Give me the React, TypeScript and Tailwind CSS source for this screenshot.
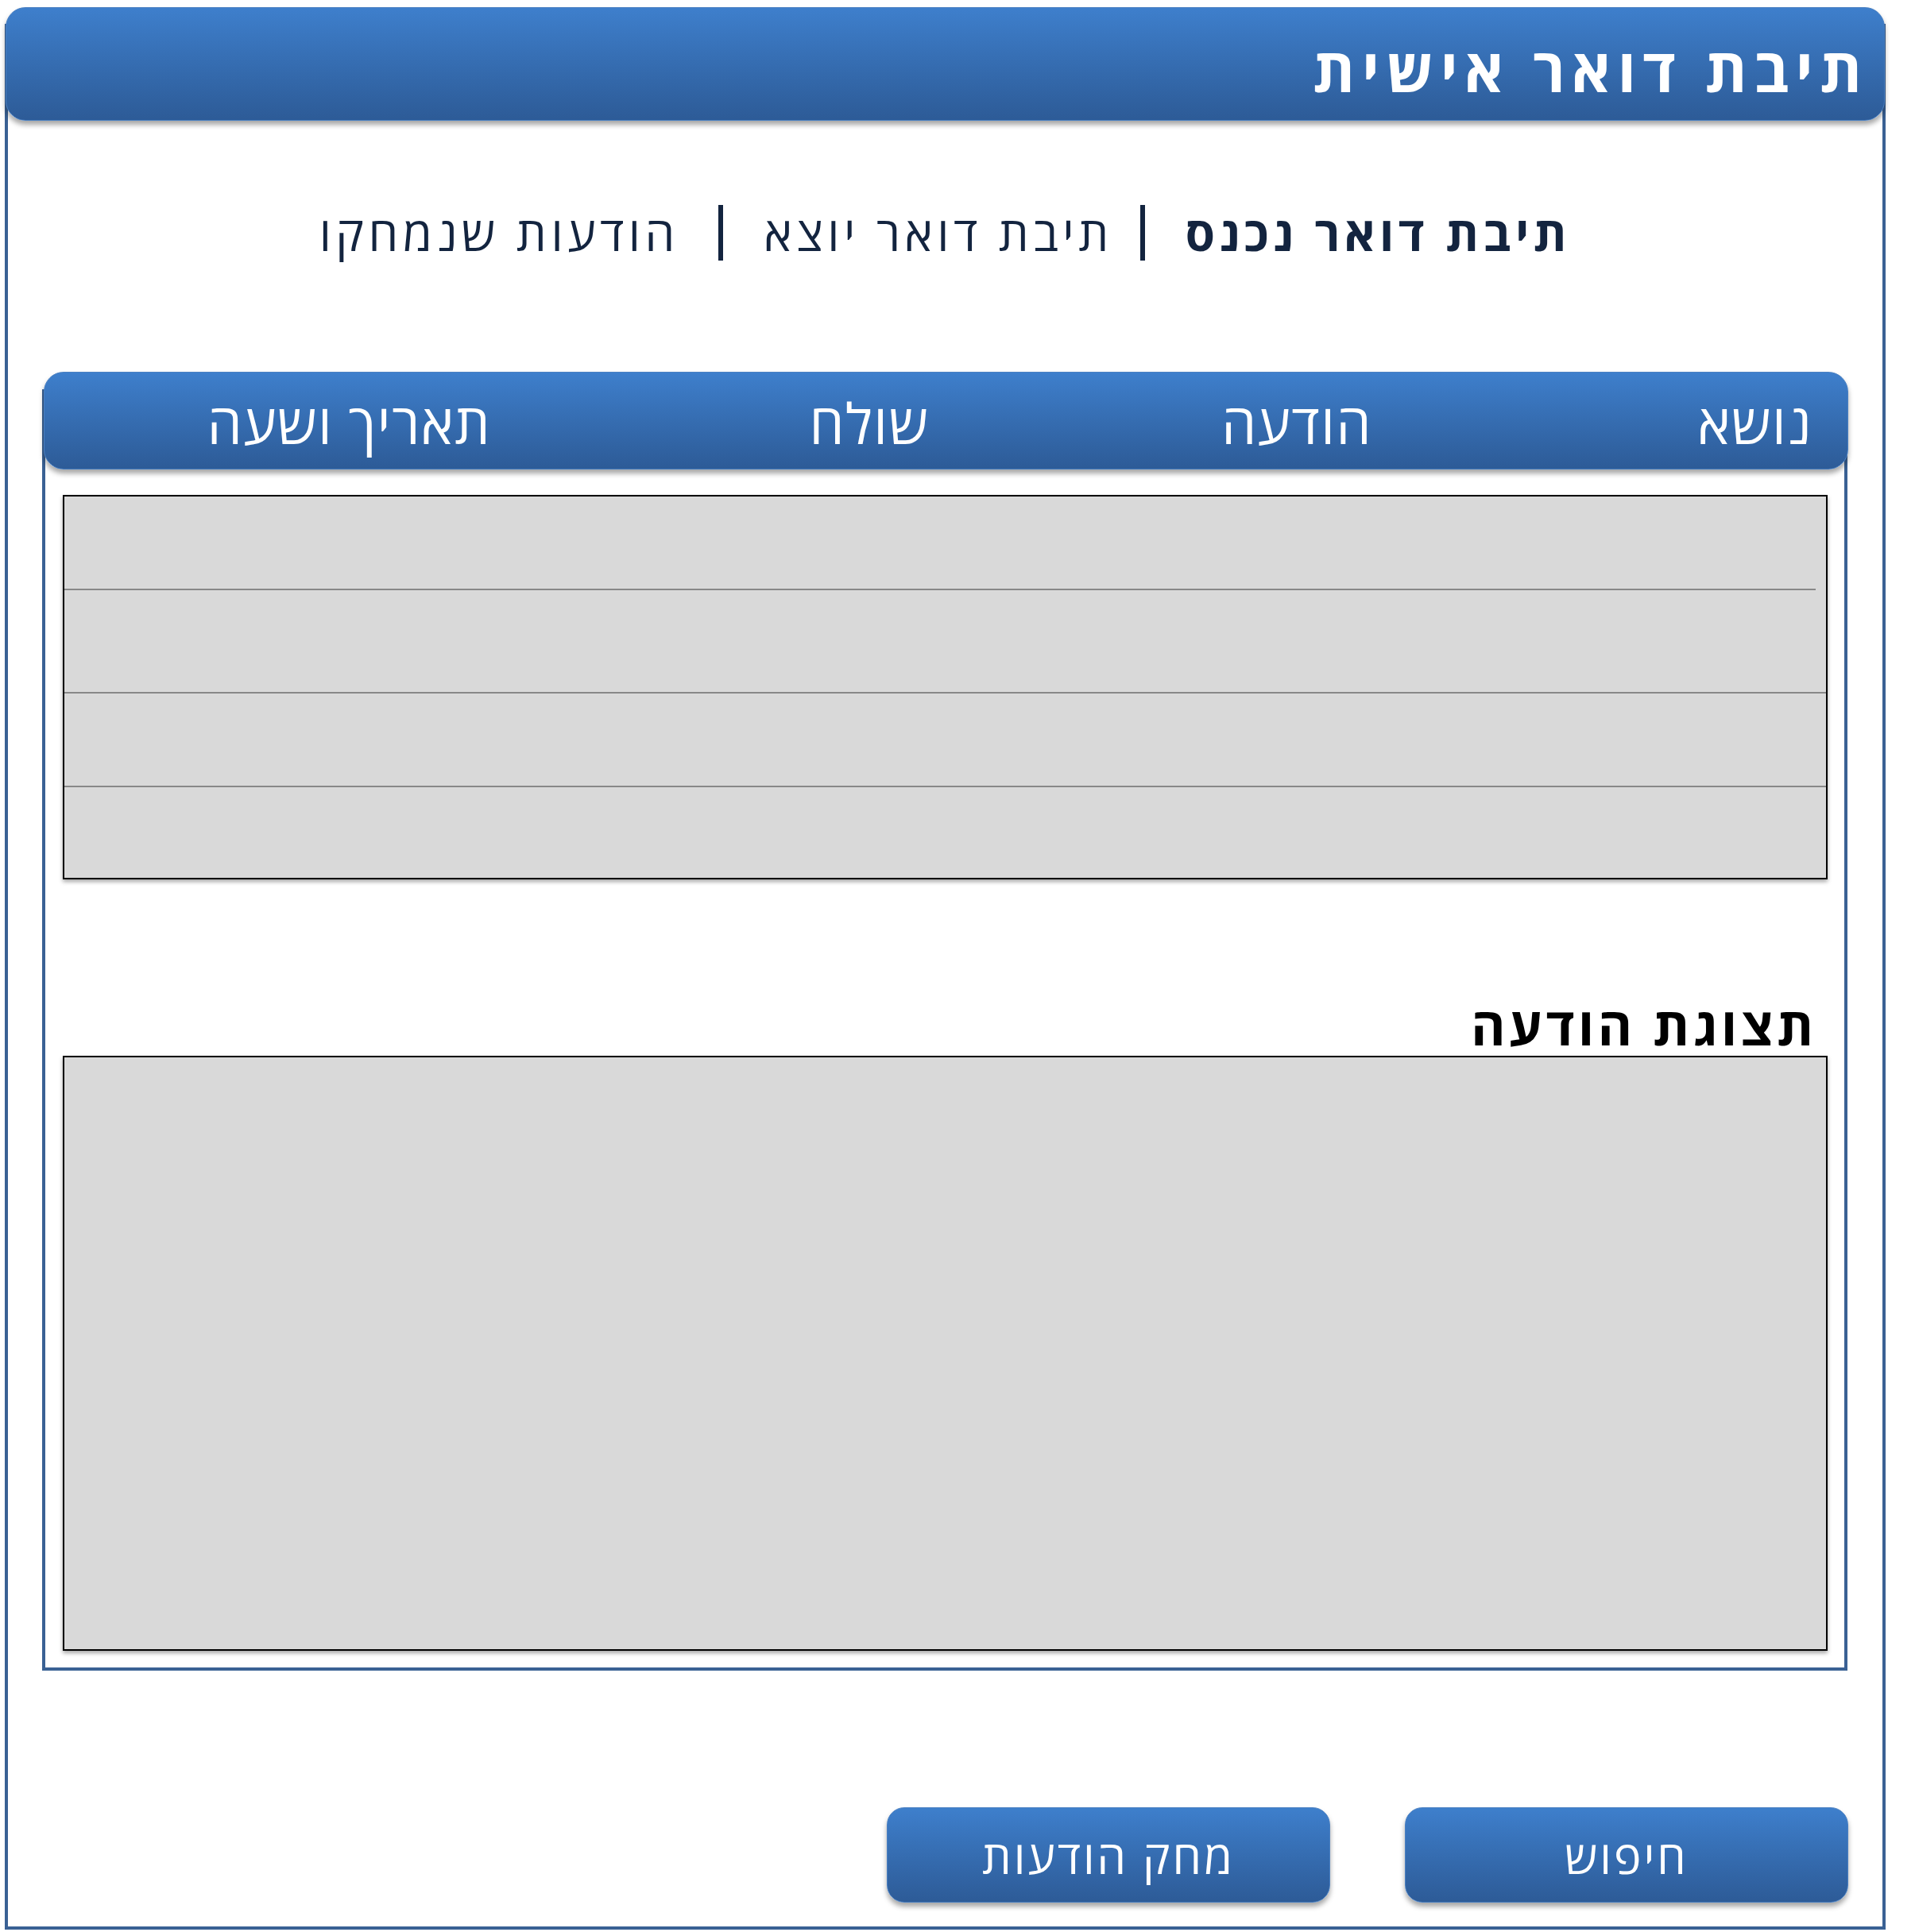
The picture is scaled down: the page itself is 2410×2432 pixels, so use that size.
import React from 'react';

const BAR = 'bg-gradient-to-b from-[#3e7fcc] to-[#2d5b97] border border-[#4a80c2] shadow-[0_5px_6px_rgba(0,0,0,0.35)] text-white';

const Button = ({ label }: { label: string }) => (
  <button className={`w-[558px] h-[120px] rounded-[22px] ${BAR} text-[58px] tracking-[3px] leading-none pt-[4px]`}>{label}</button>
);

const App = () => {
  return (
    <div dir="rtl" className="w-[2410px] h-[2432px] bg-white font-['Open_Sans','Liberation_Sans',sans-serif]">
      {/* outer frame */}
      <div className="mr-[37px] ml-[6px] mt-[30px] w-[2367px] h-[2399px] border-x-[4px] border-b-[4px] border-[#3a6194] flex flex-col">
        <div className={`-mt-[21px] -mx-[3px] h-[143px] shrink-0 rounded-[25px] ${BAR} flex items-center pr-[19px] pt-[13px]`}>
          <h1 className="text-[76px] font-bold tracking-[8.5px] leading-none">תיבת דואר אישית</h1>
        </div>

        {/* folders */}
        <div className="h-[316px] shrink-0 flex items-center justify-center pb-[34px] text-[60px] tracking-[5.5px] leading-none text-[#13243f]">
          <span className="font-bold">תיבת דואר נכנס</span>
          <span className="w-[6px] h-[70px] bg-[#13243f] mr-[51px] ml-[34px]" />
          <span>תיבת דואר יוצא</span>
          <span className="w-[6px] h-[70px] bg-[#13243f] mr-[52px] ml-[49px]" />
          <span>הודעות שנמחקו</span>
        </div>

        {/* messages panel */}
        <div className="mt-[22px] ml-[43px] mr-[44px] border-x-[4px] border-b-[4px] border-[#3a6194] flex flex-col pb-[21px]">
          <div className={`-mt-[22px] -ml-[2px] -mr-[5px] h-[123px] rounded-[25px] ${BAR} flex items-center pt-[4px] text-[70px] tracking-[1.5px] leading-none`}>
            <div className="w-[426px] pr-[44px]">נושא</div>
            <div className="w-[534px] text-center">הודעה</div>
            <div className="w-[542px] text-center">שולח</div>
            <div className="flex-1 text-center">תאריך ושעה</div>
          </div>

          <div className="mt-[32px] ml-[22px] mr-[21px] h-[484px] border-2 border-black bg-[#d9d9d9] shadow-[0_3px_5px_rgba(0,0,0,0.35)] flex flex-col">
            <div className="h-[116px]" />
            <div className="h-[2px] bg-[#888] mr-[13px]" />
            <div className="h-[128px]" />
            <div className="h-[2px] bg-[#888]" />
            <div className="h-[116px]" />
            <div className="h-[2px] bg-[#888]" />
            <div className="flex-1" />
          </div>

          <h2 className="mt-[150px] pr-[34px] text-[66px] font-bold tracking-[4.5px] leading-none text-black">תצוגת הודעה</h2>
          <div className="mt-[6px] ml-[22px] mr-[21px] h-[749px] border-2 border-black bg-[#d9d9d9] shadow-[0_3px_5px_rgba(0,0,0,0.35)]" />
        </div>

        {/* actions */}
        <div className="mt-[172px] mr-[43px] flex gap-[94px]">
          <Button label="חיפוש" />
          <Button label="מחק הודעות" />
        </div>
      </div>
    </div>
  );
};

export default App;
